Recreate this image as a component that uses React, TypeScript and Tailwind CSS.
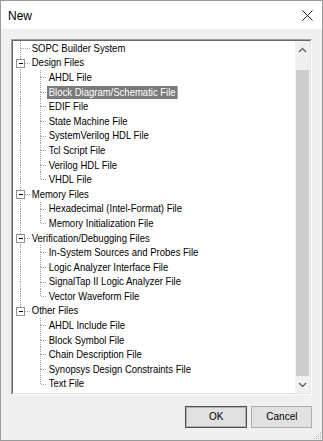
import React from "react";

type Row = { t: string; l: 0 | 1; open?: boolean; sel?: boolean; last?: boolean };

const rows: Row[] = [
  { t: "SOPC Builder System", l: 0 },
  { t: "Design Files", l: 0, open: true },
  { t: "AHDL File", l: 1 },
  { t: "Block Diagram/Schematic File", l: 1, sel: true },
  { t: "EDIF File", l: 1 },
  { t: "State Machine File", l: 1 },
  { t: "SystemVerilog HDL File", l: 1 },
  { t: "Tcl Script File", l: 1 },
  { t: "Verilog HDL File", l: 1 },
  { t: "VHDL File", l: 1, last: true },
  { t: "Memory Files", l: 0, open: true },
  { t: "Hexadecimal (Intel-Format) File", l: 1 },
  { t: "Memory Initialization File", l: 1, last: true },
  { t: "Verification/Debugging Files", l: 0, open: true },
  { t: "In-System Sources and Probes File", l: 1 },
  { t: "Logic Analyzer Interface File", l: 1 },
  { t: "SignalTap II Logic Analyzer File", l: 1 },
  { t: "Vector Waveform File", l: 1, last: true },
  { t: "Other Files", l: 0, open: true, last: true },
  { t: "AHDL Include File", l: 1 },
  { t: "Block Symbol File", l: 1 },
  { t: "Chain Description File", l: 1 },
  { t: "Synopsys Design Constraints File", l: 1 },
  { t: "Text File", l: 1, last: true },
];

const DOT = "#a0a0a0";
const font = { fontFamily: '"Liberation Sans", Arial, sans-serif' };

// one indentation cell of the tree guide lines
const Guide = ({ x, up, down, dash, box }: { x: number; up?: boolean; down?: boolean; dash?: boolean; box?: boolean }) => (
  <svg width="17" height="14.6" className="shrink-0 block" shapeRendering="crispEdges">
    {up && <line x1={x + 0.5} y1="0" x2={x + 0.5} y2="7.3" stroke={DOT} strokeDasharray="1 1" />}
    {down && <line x1={x + 0.5} y1="7.3" x2={x + 0.5} y2="14.6" stroke={DOT} strokeDasharray="1 1" />}
    {dash && <line x1={x + 0.5} y1="7.5" x2="17" y2="7.5" stroke={DOT} strokeDasharray="1 1" />}
    {box && (
      <>
        <rect x={x - 3.5} y="3.5" width="8" height="8" fill="#fff" stroke="#919191" />
        <line x1={x - 1.5} y1="7.5" x2={x + 3} y2="7.5" stroke="#000" />
      </>
    )}
  </svg>
);

export default function App() {
  let parentLast = false;
  return (
    <div className="w-[323px] h-[441px] border border-[#9a9a9a] bg-[#f0f0f0] flex flex-col select-none" style={font}>
      {/* title bar */}
      <div className="h-[28px] bg-white flex items-center justify-between pl-[7px] pr-[9px] shrink-0">
        <span className="text-[12px] text-black pt-[1px]">New</span>
        <svg width="11" height="11" viewBox="0 0 11 11">
          <path d="M0.5 0.5 L10.5 10.5 M10.5 0.5 L0.5 10.5" stroke="#222" strokeWidth="1" />
        </svg>
      </div>

      <div className="flex-1 flex flex-col px-[10px] pt-[10px]">
        {/* tree view */}
        <div className="h-[356px] border-t border-l border-[#a0a0a0] border-b-white border-r-white border-b border-r">
          <div className="h-full border-t border-l border-[#696969] border-b border-r border-b-[#e3e3e3] border-r-[#e3e3e3] bg-white flex">
            <div className="flex-1 flex flex-col">
              {rows.map((r, i) => {
                if (r.l === 0) parentLast = !!r.last;
                return (
                  <div key={i} className="h-[14.6px] flex items-center shrink-0">
                    {r.l === 0 ? (
                      <Guide x={7} up down={!r.last} dash box={r.open} />
                    ) : (
                      <>
                        <Guide x={7} up={!parentLast} down={!parentLast} />
                        <Guide x={10} up down={!r.last} dash />
                      </>
                    )}
                    <span
                      className={`px-[2px] h-[13px] leading-[13px] text-[11px] whitespace-nowrap origin-left scale-x-[0.865] ${
                        r.sel ? "bg-[#7a7a7a] text-white" : "text-black"
                      }`}
                    >
                      {r.t}
                    </span>
                  </div>
                );
              })}
            </div>
            {/* vertical scrollbar */}
            <div className="w-[15px] bg-[#f0f0f0] flex flex-col shrink-0">
              <div className="h-[17px] flex items-center justify-center">
                <svg width="9" height="6" viewBox="0 0 9 6">
                  <path d="M1 5 L4.5 1.5 L8 5" fill="none" stroke="#606060" strokeWidth="1.4" />
                </svg>
              </div>
              <div className="flex-1 flex flex-col pt-[12px] px-[1px]">
                <div className="flex-1 bg-[#cdcdcd]" />
              </div>
              <div className="h-[17px] flex items-center justify-center">
                <svg width="9" height="6" viewBox="0 0 9 6">
                  <path d="M1 1 L4.5 4.5 L8 1" fill="none" stroke="#606060" strokeWidth="1.4" />
                </svg>
              </div>
            </div>
          </div>
        </div>

        {/* buttons */}
        <div className="flex justify-end gap-[4px] mt-[11px]">
          <button className="w-[62px] h-[22px] bg-[#e1e1e1] border border-[#4d4d4d] shadow-[inset_0_0_0_1px_#b0b0b0] text-[11.5px] text-black">
            <span className="inline-block scale-x-[0.87]">OK</span>
          </button>
          <button className="w-[61px] h-[22px] bg-[#e1e1e1] border border-[#adadad] text-[11.5px] text-black">
            <span className="inline-block scale-x-[0.87]">Cancel</span>
          </button>
        </div>

        {/* size grip */}
        <div className="flex-1 flex justify-end items-end -mr-[10px]">
          <svg width="8" height="8" viewBox="0 0 8 8">
            <g fill="#b8b8b8">
              <rect x="6" y="0" width="1" height="1" />
              <rect x="4" y="2" width="1" height="1" />
              <rect x="6" y="2" width="1" height="1" />
              <rect x="2" y="4" width="1" height="1" />
              <rect x="4" y="4" width="1" height="1" />
              <rect x="6" y="4" width="1" height="1" />
              <rect x="0" y="6" width="1" height="1" />
              <rect x="2" y="6" width="1" height="1" />
              <rect x="4" y="6" width="1" height="1" />
              <rect x="6" y="6" width="1" height="1" />
            </g>
          </svg>
        </div>
      </div>
    </div>
  );
}
